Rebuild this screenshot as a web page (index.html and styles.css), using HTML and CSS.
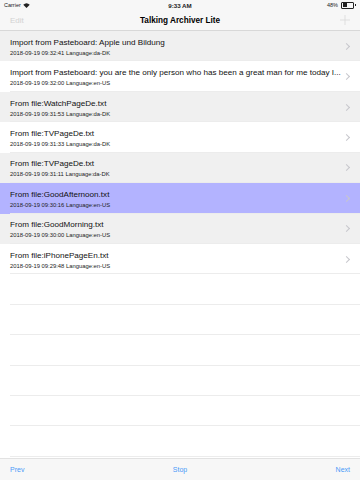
FILE: index.html
```html
<!DOCTYPE html>
<html lang="en">
<head>
  <meta charset="UTF-8" />
  <title>Talking Archiver Lite</title>
  <link rel="stylesheet" href="styles.css">
</head>
<body>

  <div class="status-bar">
    <div class="carrier">Carrier
      <svg width="7" height="5" viewBox="0 0 14 10"><path d="M7 10 L0.5 3.5 A9.5 9.5 0 0 1 13.5 3.5 Z" fill="#222"/></svg>
    </div>
    <div class="clock">9:33 AM</div>
    <div class="battery">48%
      <span class="battery-body"><span class="battery-level"></span></span><span class="battery-tip"></span>
    </div>
  </div>

  <div class="nav-bar">
    <span class="nav-edit">Edit</span>
    <span class="nav-title">Talking Archiver Lite</span>
    <span class="nav-add">
      <svg width="10" height="10" viewBox="0 0 10 10"><path d="M5 0 V10 M0 5 H10" stroke="#d9d9d9" stroke-width="0.8"/></svg>
    </span>
  </div>

  <div class="list">
    <div class="cell odd">
      <div class="cell-text">
        <div class="cell-title">Import from Pasteboard: Apple und Bildung</div>
        <div class="cell-sub">2018-09-19 09:32:41 Language:da-DK</div>
      </div>
      <span class="chevron"></span>
    </div>
    <div class="cell">
      <div class="cell-text">
        <div class="cell-title">Import from Pasteboard: you are the only person who has been a great man for me today I...</div>
        <div class="cell-sub">2018-09-19 09:32:00 Language:en-US</div>
      </div>
      <span class="chevron"></span>
    </div>
    <div class="cell odd">
      <div class="cell-text">
        <div class="cell-title">From file:WatchPageDe.txt</div>
        <div class="cell-sub">2018-09-19 09:31:53 Language:da-DK</div>
      </div>
      <span class="chevron"></span>
    </div>
    <div class="cell">
      <div class="cell-text">
        <div class="cell-title">From file:TVPageDe.txt</div>
        <div class="cell-sub">2018-09-19 09:31:33 Language:da-DK</div>
      </div>
      <span class="chevron"></span>
    </div>
    <div class="cell odd">
      <div class="cell-text">
        <div class="cell-title">From file:TVPageDe.txt</div>
        <div class="cell-sub">2018-09-19 09:31:11 Language:da-DK</div>
      </div>
      <span class="chevron"></span>
    </div>
    <div class="cell selected">
      <div class="cell-text">
        <div class="cell-title">From file:GoodAfternoon.txt</div>
        <div class="cell-sub">2018-09-19 09:30:16 Language:en-US</div>
      </div>
      <span class="chevron"></span>
    </div>
    <div class="cell odd">
      <div class="cell-text">
        <div class="cell-title">From file:GoodMorning.txt</div>
        <div class="cell-sub">2018-09-19 09:30:00 Language:en-US</div>
      </div>
      <span class="chevron"></span>
    </div>
    <div class="cell">
      <div class="cell-text">
        <div class="cell-title">From file:iPhonePageEn.txt</div>
        <div class="cell-sub">2018-09-19 09:29:48 Language:en-US</div>
      </div>
      <span class="chevron"></span>
    </div>
    <div class="cell empty"></div>
    <div class="cell empty"></div>
    <div class="cell empty"></div>
    <div class="cell empty"></div>
    <div class="cell empty"></div>
    <div class="cell empty"></div>
  </div>

  <div class="toolbar">
    <span class="tool-btn">Prev</span>
    <span class="tool-btn">Stop</span>
    <span class="tool-btn">Next</span>
  </div>

</body>
</html>
```

FILE: styles.css
```css
body {
  margin: 0;
  width: 360px;
  height: 480px;
  font-family: 'Liberation Sans', Arial, sans-serif;
  background: #fff;
  color: #000;
  display: flex;
  flex-direction: column;
  overflow: hidden;
}

.status-bar {
  height: 10px;
  background: #f7f7f7;
  display: flex;
  align-items: center;
  justify-content: space-between;
  padding: 0 4px;
  font-size: 5.5px;
  color: #222;
}

.carrier, .battery {
  width: 60px;
  display: flex;
  align-items: center;
  gap: 2px;
}

.battery {
  justify-content: flex-end;
}

.clock {
  font-size: 6.2px;
  font-weight: bold;
}

.battery-body {
  width: 10px;
  height: 4px;
  border: 0.6px solid #222;
  border-radius: 1px;
  padding: 0.5px;
  display: flex;
  margin-left: 1px;
}

.battery-level {
  width: 48%;
  background: #222;
}

.battery-tip {
  width: 1px;
  height: 2px;
  background: #222;
  margin-left: -1px;
}

.nav-bar {
  height: 20px;
  background: #f7f7f7;
  border-bottom: 1px solid #d8d8d8;
  display: flex;
  align-items: center;
  justify-content: space-between;
  padding: 0 10px;
}

.nav-edit {
  width: 40px;
  font-size: 8px;
  color: #d2d2d2;
}

.nav-title {
  font-size: 8.2px;
  font-weight: bold;
}

.nav-add {
  width: 40px;
  display: flex;
  justify-content: flex-end;
}

.list {
  flex: 1;
  overflow: hidden;
}

.cell {
  height: 30.43px;
  box-sizing: border-box;
  display: flex;
  align-items: center;
  padding: 0 10px;
  position: relative;
  background: #fff;
}

.cell::after {
  content: '';
  position: absolute;
  left: 10px;
  right: 0;
  bottom: 0;
  height: 1px;
  background: #ececec;
}

.cell.odd {
  background: #f0f0f0;
}

.cell.selected {
  background: #b3b3ff;
}

.cell-text {
  flex: 1;
  min-width: 0;
  padding-top: 1px;
}

.cell-title {
  font-size: 8.1px;
  color: #111;
  white-space: nowrap;
  margin-bottom: 3px;
}

.cell-sub {
  font-size: 5.85px;
  color: #222;
}

.chevron {
  width: 4px;
  height: 4px;
  border-right: 0.8px solid #c7c7cc;
  border-top: 0.8px solid #c7c7cc;
  transform: rotate(45deg);
  margin-left: 8px;
  margin-right: 1px;
}

.toolbar {
  height: 21px;
  background: #f7f7f7;
  border-top: 1px solid #e2e2e2;
  display: flex;
  align-items: center;
  justify-content: space-between;
  padding: 0 10px;
  font-size: 7px;
  color: #4a9af8;
}
```
